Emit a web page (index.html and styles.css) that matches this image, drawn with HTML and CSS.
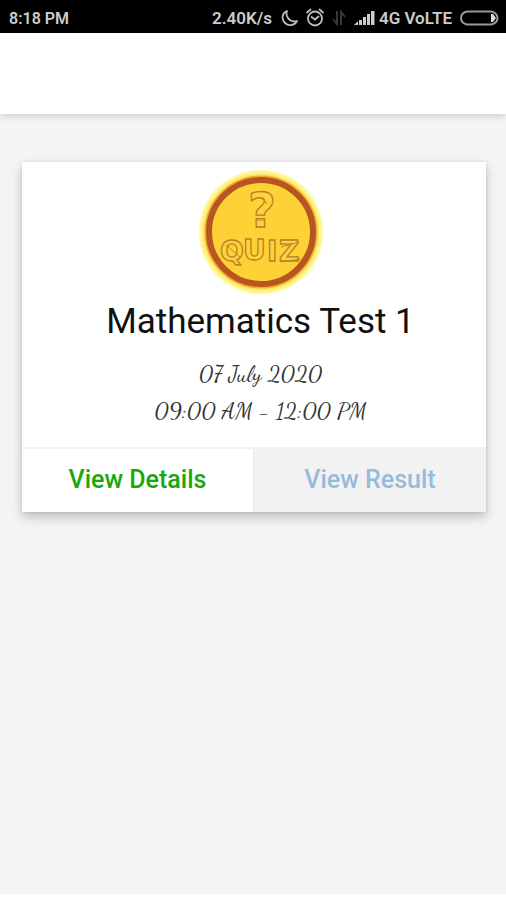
FILE: index.html
```html
<!DOCTYPE html>
<html lang="en">
<head>
<meta charset="utf-8">
<meta name="viewport" content="width=device-width, initial-scale=1">
<title>Mathematics Test 1</title>
<link rel="stylesheet" href="styles.css">
</head>
<body>
<div class="status">
  <span>8:18 PM</span>
  <div class="status-right">
    <span>2.40K/s</span>
    <svg class="moon" width="17" height="18" viewBox="0 0 17 18"><path d="M6 2C1 4 0 10 4 14c4 4 10 2 12-2-4 1-7 0-9-3S5 4 6 2Z" fill="none" stroke="#bbb" stroke-width="1.8" stroke-linejoin="round"/></svg>
    <svg class="alarm" width="18" height="20" viewBox="0 0 18 20" fill="none" stroke="#bbb" stroke-width="1.8" stroke-linecap="round"><circle cx="9" cy="10.500" r="7"/><path d="M5.500 9 9 11.500 12.500 8.500M1 4.500 4.500 1.500M17 4.500 13.500 1.500"/></svg>
    <svg class="data" width="14" height="16" viewBox="0 0 14 16" fill="none" stroke="#3a3a3a" stroke-width="2"><path d="M5 1V14L1 9M9 15V2l4 5"/></svg>
    <svg class="signal" width="21" height="16" viewBox="0 0 21 16" fill="#ccc"><path d="M0 15 4 11V15ZM5 10h3v5H5ZM9 7h3v8H9ZM13 4h3v11h-3ZM17 1h3.500v14H17Z"/></svg>
    <span class="network">4G VoLTE</span>
    <svg class="battery" width="39" height="16" viewBox="0 0 39 16"><path d="M7 1.500H31Q37.500 3 37.500 8T31 14.500H7Q1 13 1 8T7 1.500Z" fill="none" stroke="#999" stroke-width="2"/><path d="M31 4h2l3 4-3 4h-2Z" fill="#ddd"/></svg>
  </div>
</div>
<header class="toolbar"></header>
<main class="page">
  <article class="card">
    <div class="card-body">
      <svg class="logo" width="126" height="126" viewBox="0 0 126 126" role="img" aria-label="Quiz">
        <defs><radialGradient id="glow"><stop offset="0.900" stop-color="#fcdf62"/><stop offset="0.930" stop-color="#fff080"/><stop offset="0.970" stop-color="#fff99b"/><stop offset="1" stop-color="#fffbc0" stop-opacity="0.200"/></radialGradient></defs>
        <circle cx="63" cy="63" r="63" fill="url(#glow)"/>
        <circle cx="63" cy="63" r="53" fill="#fed136" stroke="#f3a929" stroke-width="7"/>
        <circle cx="63" cy="63" r="52" fill="#fed136" stroke="#b65722" stroke-width="6"/>
        <g class="logo-text">
          <text class="mark" x="50" y="58">?</text>
          <text class="word" x="22 45 69 81" y="92 91 92 92">QUIZ</text>
        </g>
        <path d="M53 32q10-8 16 3M59 51h8M28 76l14 12M83 78l18-5M83 93l20-3" fill="none" stroke="#bd8528"/>
      </svg>
      <h1 class="title">Mathematics Test 1</h1>
      <p class="when"><time datetime="2020-07-07">07 July 2020</time></p>
      <p class="when">09:00 AM - 12:00 PM</p>
    </div>
    <div class="actions">
      <button class="action details" type="button">View Details</button>
      <button class="action result" type="button" disabled>View Result</button>
    </div>
  </article>
</main>
</body>
</html>
```
FILE: styles.css
```css
* { box-sizing: border-box; }
body {
  margin: 0;
  min-height: 100vh;
  display: flex;
  flex-direction: column;
  background: #fff;
  color: #111;
  font-family: Roboto, sans-serif;
}
.status {
  display: flex;
  justify-content: space-between;
  align-items: center;
  height: 33px;
  padding: 3px 7px 0 9px;
  background: #000;
  color: #ccc;
  font-size: 16px;
  font-weight: 600;
}
.status-right { display: flex; align-items: center; gap: 8px; }
.network { margin-left: -4px; font-size: 17px; }
.moon { margin-left: 1px; }
.toolbar {
  height: 81px;
  position: relative;
  background: #fff;
  box-shadow: 0 1px 8px rgba(0, 0, 0, 0.2);
}
.page {
  flex: 1;
  margin-bottom: 6px;
  padding: 48px 20px 48px 22px;
  background: #f4f4f4;
}
.card {
  background: #fff;
  box-shadow: 0 5px 10px rgba(0, 0, 0, 0.22), 0 0 3px rgba(0, 0, 0, 0.1);
}
.status-right span:first-child { font-size: 17px; }
.card-body {
  display: flex;
  flex-direction: column;
  align-items: center;
  padding: 7px 0 17px 13px;
}
.logo { display: block; }
.logo-text {
  fill: #fdd23b;
  stroke: #b98226;
  stroke-width: 1.3;
  font-family: "DejaVu Sans", sans-serif;
  font-weight: 700;
}
.mark { font-size: 48px; }
.word { font-size: 28px; }
.title {
  margin: 7px 0 13px;
  font-size: 35px;
  line-height: 40px;
  font-weight: 400;
}
.when {
  margin: 0;
  font-family: "Dancing Script", "Liberation Serif", cursive;
  font-size: 23px;
  line-height: 37px;
  color: #333;
}
.actions {
  display: grid;
  grid-template-columns: 1fr 1fr;
  margin-top: 1px;
  border-top: 2px solid #f1f1f1;
}
.action {
  height: 63px;
  padding: 0 0 2px;
  border: 0;
  background: #fff;
  font: 500 25px/30px Roboto, sans-serif;
}
.details { color: #19a80b; border-right: 1px solid #e8e8e8; }
.result { color: #97bbdc; background: #f2f2f2; }
```
